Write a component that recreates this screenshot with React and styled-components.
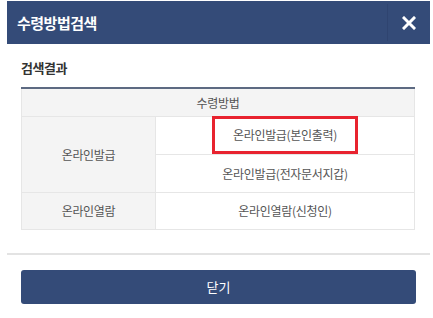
import React from 'react'
import styled, { createGlobalStyle } from 'styled-components'

const GlobalStyle = createGlobalStyle`
  html, body {
    margin: 0;
    padding: 0;
    background: #fff;
  }
  body {
    font-family: "Noto Sans CJK KR", "Noto Sans", sans-serif;
  }
`

const StyledDialog = styled.div`
  width: 423px;
  margin: 1px 0 0 7px;
  background: #fff;
`

const StyledTitleBar = styled.div`
  display: flex;
  align-items: center;
  height: 43px;
  background: #344b78;
  color: #fff;
`

const StyledTitle = styled.h1`
  flex: 1;
  margin: 0;
  padding-left: 10px;
  font-size: 15px;
  font-weight: 700;
  letter-spacing: -0.5px;
`

const StyledClose = styled.button`
  display: flex;
  align-items: center;
  justify-content: center;
  width: 43px;
  height: 37px;
  padding: 0;
  border: 0;
  border-left: 1px solid #2f4470;
  background: transparent;
  color: #fff;
  cursor: pointer;
`

const StyledBody = styled.div`
  padding: 15px 14px 23px;
  border-bottom: 2px solid #e3e3e3;
`

const StyledSubTitle = styled.h2`
  margin: 0 0 10px;
  font-size: 13px;
  font-weight: 700;
  color: #333;
  letter-spacing: -0.5px;
  line-height: 18px;
`

const StyledTable = styled.table`
  width: 394px;
  border-collapse: collapse;
  border-top: 2px solid #5d6a82;
  font-size: 12px;
  color: #555;
  letter-spacing: -0.3px;
`

const StyledCell = styled.td`
  box-sizing: border-box;
  height: ${p => p.$height || 37}px;
  padding: 0;
  text-align: center;
  border: 1px solid #e6e6e6;
  background: ${p => (p.$head ? '#f4f4f4' : '#fff')};
  width: ${p => (p.$side ? '134px' : 'auto')};
`

const StyledHighlight = styled.span`
  display: inline-flex;
  align-items: center;
  justify-content: center;
  box-sizing: border-box;
  width: 146px;
  height: 38px;
  margin-top: -1px;
  border: 3px solid #e8232f;
`

const StyledFooter = styled.div`
  padding: 15px 14px 0;
`

const StyledButton = styled.button`
  display: block;
  width: 395px;
  height: 34px;
  border: 0;
  border-radius: 3px;
  background: #344b78;
  color: #fff;
  font-family: inherit;
  font-size: 13px;
  cursor: pointer;
`

const App = () => {
  return (
    <>
      <GlobalStyle />
      <StyledDialog>
        <StyledTitleBar>
          <StyledTitle>수령방법검색</StyledTitle>
          <StyledClose aria-label="닫기">
            <svg width="14" height="14" viewBox="0 0 14 14">
              <path d="M2 2 L12 12 M12 2 L2 12" stroke="#fff" strokeWidth="3" strokeLinecap="square" />
            </svg>
          </StyledClose>
        </StyledTitleBar>
        <StyledBody>
          <StyledSubTitle>검색결과</StyledSubTitle>
          <StyledTable>
            <tbody>
              <tr>
                <StyledCell $head colSpan={2} $height={28}>수령방법</StyledCell>
              </tr>
              <tr>
                <StyledCell $head $side rowSpan={2}>온라인발급</StyledCell>
                <StyledCell>
                  <StyledHighlight>온라인발급(본인출력)</StyledHighlight>
                </StyledCell>
              </tr>
              <tr>
                <StyledCell $height={38}>온라인발급(전자문서지갑)</StyledCell>
              </tr>
              <tr>
                <StyledCell $head $side>온라인열람</StyledCell>
                <StyledCell>온라인열람(신청인)</StyledCell>
              </tr>
            </tbody>
          </StyledTable>
        </StyledBody>
        <StyledFooter>
          <StyledButton>닫기</StyledButton>
        </StyledFooter>
      </StyledDialog>
    </>
  )
}

export default App
